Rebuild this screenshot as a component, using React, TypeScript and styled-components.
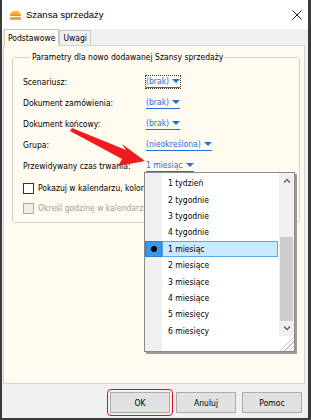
import React from 'react';
import styled, { createGlobalStyle, css } from 'styled-components';

const GlobalStyle = createGlobalStyle`
  html, body {
    margin: 0;
    padding: 0;
    background: #fff;
  }
  * {
    box-sizing: border-box;
  }
`;

const Window = styled.div`
  position: relative;
  width: 311px;
  height: 420px;
  display: flex;
  flex-direction: column;
  background: #f0f0f0;
  border-style: solid;
  border-color: #3a3a3a;
  border-width: 0 3px 2px 2px;
  font-family: 'DejaVu Sans Condensed', 'DejaVu Sans', sans-serif;
  font-stretch: condensed;
  font-size: 8.5px;
  color: #000;
  overflow: hidden;
`;

const TitleBar = styled.div`
  height: 29px;
  flex: none;
  display: flex;
  align-items: center;
  padding: 0 6px 0 7px;
  background: #fff;
`;

const TitleText = styled.span`
  margin-left: 4px;
  font-family: 'Liberation Sans', Arial, sans-serif;
  font-stretch: normal;
  font-size: 9.5px;
  color: #000;
  flex: 1;
`;

const CloseButton = styled.span`
  display: flex;
  align-items: center;
`;

const TabStrip = styled.div`
  height: 16px;
  flex: none;
  display: flex;
  align-items: flex-end;
  padding-left: 2px;
`;

const Tab = styled.div<{ $active?: boolean }>`
  height: 15px;
  padding: 0 3px;
  display: flex;
  align-items: center;
  border: 1px solid #c8c8c8;
  border-bottom: none;
  background: #f0f0f0;
  ${({ $active }) =>
    $active &&
    css`
      height: 17px;
      background: #fffbf0;
      position: relative;
      z-index: 1;
      margin-bottom: -1px;
      padding: 0 3px 1px;
    `}
`;

const Panel = styled.div`
  margin: 0 3px 0 1px;
  height: 339px;
  flex: none;
  background: #fffbf0;
  border: 1px solid #d4d4d4;
  padding: 6px 4px 0 8px;
`;

const GroupBox = styled.fieldset`
  margin: 0;
  padding: 9px 0 0 10px;
  height: 171px;
  border: 1px solid #d2d2d2;
  border-radius: 3px;
  min-width: 0;
`;

const Legend = styled.legend`
  padding: 0 2px;
  margin-left: 7px;
  line-height: 10px;
`;

const FieldGrid = styled.div`
  display: grid;
  grid-template-columns: 123px 1fr;
  grid-auto-rows: 21px;
  align-items: center;
  margin-bottom: 2px;
`;

const Label = styled.span`
  white-space: nowrap;
`;

const LinkValue = styled.span<{ $focused?: boolean }>`
  justify-self: start;
  display: inline-flex;
  align-items: center;
  color: #1a73d9;
  border-bottom: 1px solid #1a73d9;
  line-height: 11px;
  ${({ $focused }) =>
    $focused &&
    css`
      outline: 1px dotted #333;
    `}
`;

const Caret = styled.span`
  margin-left: 3px;
  width: 0;
  height: 0;
  border-left: 4px solid transparent;
  border-right: 4px solid transparent;
  border-top: 4px solid #1a73d9;
`;

const CheckRow = styled.label<{ $disabled?: boolean }>`
  height: 20px;
  display: flex;
  align-items: center;
  white-space: nowrap;
  color: ${({ $disabled }) => ($disabled ? '#a0a0a0' : '#000')};
`;

const CheckBox = styled.span<{ $disabled?: boolean }>`
  width: 11px;
  height: 11px;
  margin-right: 4px;
  border: 1px solid ${({ $disabled }) => ($disabled ? '#a8a8a8' : '#333')};
  background: ${({ $disabled }) => ($disabled ? '#eee' : '#fff')};
`;

const ButtonBar = styled.div`
  flex: 1;
  display: flex;
  justify-content: flex-end;
  align-items: flex-start;
  padding: 5px 3px 0 0;
`;

const ButtonWrap = styled.div<{ $marked?: boolean }>`
  padding: 2px;
  border-radius: 4px;
  border: 1px solid ${({ $marked }) => ($marked ? '#e0101a' : 'transparent')};
`;

const Button = styled.button`
  width: 60px;
  height: 21px;
  padding: 0;
  font-family: 'DejaVu Sans Condensed', 'DejaVu Sans', sans-serif;
  font-stretch: condensed;
  font-size: 8.5px;
  color: #000;
  background: #e1e1e1;
  border: 1px solid #adadad;
`;

const Popup = styled.div`
  position: absolute;
  left: 142px;
  top: 172px;
  width: 151px;
  height: 180px;
  display: flex;
  background: #fff;
  border: 1px solid #8a8a8a;
  box-shadow: 2px 2px 0 #9a9a9a;
  z-index: 5;
`;

const Gutter = styled.div`
  width: 17px;
  background: #f0f0f0;
  flex: none;
`;

const ItemList = styled.div`
  flex: 1;
  padding-top: 2px;
  position: relative;
`;

const Item = styled.div<{ $selected?: boolean }>`
  height: 16.4px;
  display: flex;
  align-items: center;
  padding-left: 6px;
  margin-right: 16px;
  ${({ $selected }) =>
    $selected &&
    css`
      background: #cce8ff;
      border: 1px solid #5fa8e8;
      padding-left: 5px;
      position: relative;
    `}
`;

const Bullet = styled.span`
  position: absolute;
  left: -18px;
  top: -1px;
  width: 17px;
  height: 16.4px;
  background: #3b96e6;
  border: 1px solid #2a7fd0;
  display: flex;
  align-items: center;
  justify-content: center;
  &::after {
    content: '';
    width: 6px;
    height: 6px;
    border-radius: 50%;
    background: #000;
  }
`;

const ScrollBar = styled.div`
  position: absolute;
  right: 0;
  top: 0;
  bottom: 15px;
  width: 15px;
  background: #f0f0f0;
  display: flex;
  flex-direction: column;
  align-items: center;
`;

const ScrollArrow = styled.div`
  height: 17px;
  display: flex;
  align-items: center;
  justify-content: center;
`;

const ScrollTrack = styled.div`
  flex: 1;
  width: 100%;
  padding-top: 48px;
`;

const Thumb = styled.div`
  height: 84px;
  margin: 0 1px;
  background: #cdcdcd;
`;

const Grip = styled.div`
  position: absolute;
  right: 0;
  bottom: 0;
  width: 15px;
  height: 15px;
  background: repeating-linear-gradient(
    135deg,
    transparent 0 2px,
    #c6c6c6 2px 3px
  );
  clip-path: polygon(100% 0, 100% 100%, 0 100%);
`;

const ArrowOverlay = styled.svg`
  position: absolute;
  left: 0;
  top: 0;
  pointer-events: none;
  z-index: 6;
`;

const durations = [
  '1 tydzień',
  '2 tygodnie',
  '3 tygodnie',
  '4 tygodnie',
  '1 miesiąc',
  '2 miesiące',
  '3 miesiące',
  '4 miesiące',
  '5 miesięcy',
  '6 miesięcy',
];

const AppIcon = () => (
  <svg width='13' height='13' viewBox='0 0 13 13'>
    <defs>
      <linearGradient id='sun' x1='0' y1='0' x2='0' y2='1'>
        <stop offset='0' stopColor='#ffcf4a' />
        <stop offset='1' stopColor='#f08a1c' />
      </linearGradient>
    </defs>
    <path d='M1 8 A5.5 5.5 0 0 1 12 8 Z' fill='url(#sun)' />
    <rect x='1' y='9' width='11' height='3' rx='0.5' fill='#f5a234' />
  </svg>
);

const App: React.FC = () => {
  return (
    <>
      <GlobalStyle />
      <Window>
        <TitleBar>
          <AppIcon />
          <TitleText>Szansa sprzedaży</TitleText>
          <CloseButton>
            <svg width='10' height='10' viewBox='0 0 10 10'>
              <path d='M0.5 0.5 L9.5 9.5 M9.5 0.5 L0.5 9.5' stroke='#222' strokeWidth='1' />
            </svg>
          </CloseButton>
        </TitleBar>
        <TabStrip>
          <Tab $active>Podstawowe</Tab>
          <Tab>Uwagi</Tab>
        </TabStrip>
        <Panel>
          <GroupBox>
            <Legend>Parametry dla nowo dodawanej Szansy sprzedaży</Legend>
            <FieldGrid>
              <Label>Scenariusz:</Label>
              <LinkValue $focused>
                (brak)
                <Caret />
              </LinkValue>
              <Label>Dokument zamówienia:</Label>
              <LinkValue>
                (brak)
                <Caret />
              </LinkValue>
              <Label>Dokument końcowy:</Label>
              <LinkValue>
                (brak)
                <Caret />
              </LinkValue>
              <Label>Grupa:</Label>
              <LinkValue>
                (nieokreślona)
                <Caret />
              </LinkValue>
              <Label>Przewidywany czas trwania:</Label>
              <LinkValue>
                1 miesiąc
                <Caret />
              </LinkValue>
            </FieldGrid>
            <CheckRow>
              <CheckBox />
              Pokazuj w kalendarzu, kolor
            </CheckRow>
            <CheckRow $disabled>
              <CheckBox $disabled />
              Określ godzinę w kalendarzu
            </CheckRow>
          </GroupBox>
        </Panel>
        <ButtonBar>
          <ButtonWrap $marked>
            <Button>OK</Button>
          </ButtonWrap>
          <ButtonWrap>
            <Button>Anuluj</Button>
          </ButtonWrap>
          <ButtonWrap>
            <Button>Pomoc</Button>
          </ButtonWrap>
        </ButtonBar>

        <Popup>
          <Gutter />
          <ItemList>
            {durations.map((d, i) => (
              <Item key={d} $selected={i === 4}>
                {i === 4 && <Bullet />}
                {d}
              </Item>
            ))}
            <ScrollBar>
              <ScrollArrow>
                <svg width='8' height='5' viewBox='0 0 8 5'>
                  <path d='M1 4.5 L4 1.5 L7 4.5' stroke='#606060' strokeWidth='1.3' fill='none' />
                </svg>
              </ScrollArrow>
              <ScrollTrack>
                <Thumb />
              </ScrollTrack>
              <ScrollArrow>
                <svg width='8' height='5' viewBox='0 0 8 5'>
                  <path d='M1 0.5 L4 3.5 L7 0.5' stroke='#606060' strokeWidth='1.3' fill='none' />
                </svg>
              </ScrollArrow>
            </ScrollBar>
            <Grip />
          </ItemList>
        </Popup>

        <ArrowOverlay width='311' height='420' viewBox='0 0 311 420'>
          <path
            d='M70 128 L124 150 L120 144 L143 161 L116 166 L120 159 L68 131 Z'
            fill='#ee1c1c'
          />
        </ArrowOverlay>
      </Window>
    </>
  );
};

export default App;
